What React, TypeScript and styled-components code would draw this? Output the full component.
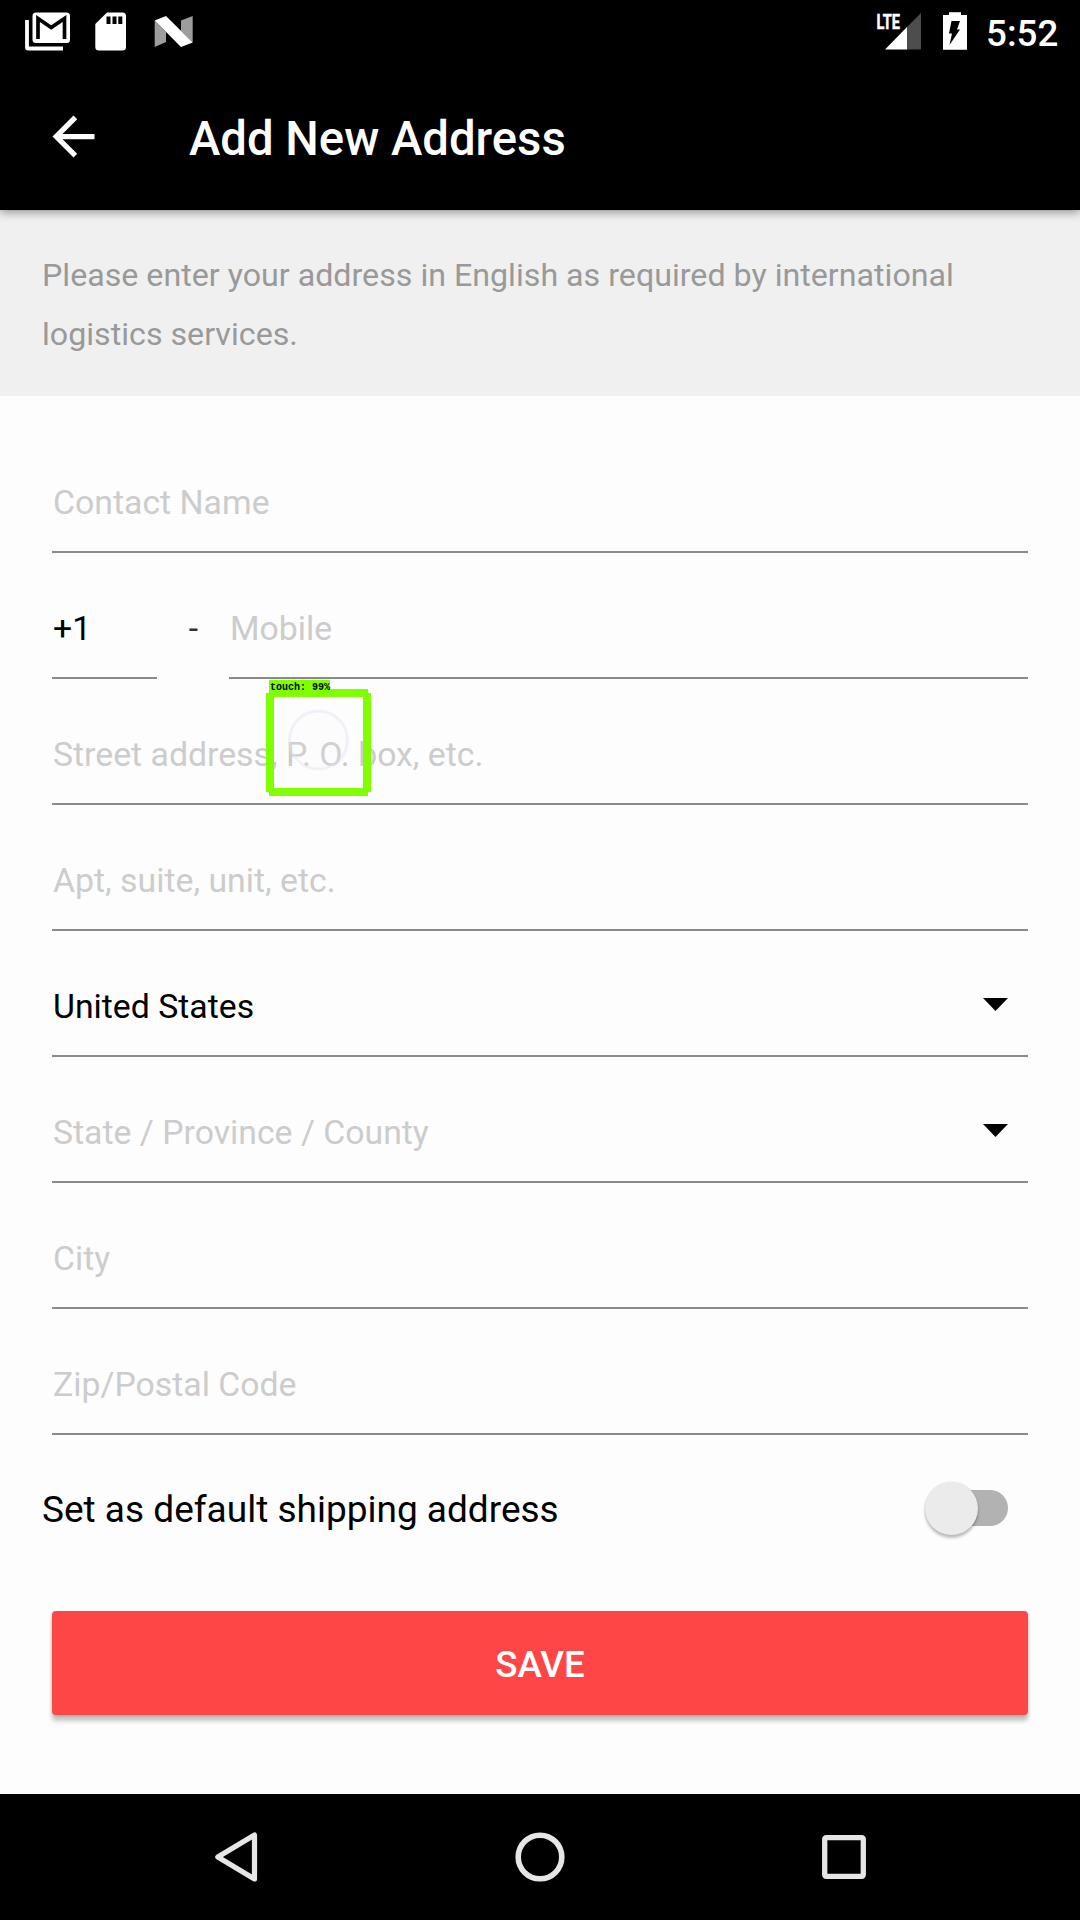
import React from "react";
import styled, { createGlobalStyle } from "styled-components";

const GlobalStyle = createGlobalStyle`
  * { box-sizing: border-box; }
  body { margin: 0; background: #fdfdfd; }
`;

const Screen = styled.div`
  width: 1080px;
  height: 1920px;
  display: flex;
  flex-direction: column;
  background: #fdfdfd;
  font-family: Roboto, "Noto Sans", sans-serif;
  overflow: hidden;
`;

const StatusBar = styled.header`
  height: 63px;
  flex: none;
  display: flex;
  justify-content: space-between;
  padding: 0 10px 0 25px;
  background: #000;
`;

const StatusGroup = styled.div`
  display: flex;
  height: 63px;
`;

const Clock = styled.span`
  width: 94px;
  padding-left: 10px;
  font-size: 36.75px;
  font-weight: 500;
  line-height: 67px;
  color: #fff;
`;

const Toolbar = styled.div`
  height: 147px;
  flex: none;
  display: flex;
  align-items: center;
  padding: 0 42px;
  background: #000;
  box-shadow: 0 2px 9px rgba(0, 0, 0, 0.42);
  position: relative;
  z-index: 1;
`;

const Title = styled.h1`
  margin: 5px 0 0 84px;
  font-size: 47.25px;
  font-weight: 500;
  line-height: 56px;
  color: #fff;
`;

const Notice = styled.p`
  margin: 0;
  height: 186px;
  flex: none;
  padding: 36px 42px 0;
  background: #f0f0f0;
  color: #999;
  font-size: 32.2px;
  line-height: 59px;
`;

const Form = styled.main`
  flex: 1;
  display: flex;
  flex-direction: column;
  padding: 31px 52px 0;
`;

const Field = styled.div<{ $width?: number; $filled?: boolean }>`
  height: 126px;
  width: ${(p) => (p.$width ? `${p.$width}px` : "auto")};
  flex: ${(p) => (p.$width ? "none" : "0 0 126px")};
  display: flex;
  justify-content: space-between;
  align-items: flex-end;
  padding: 0 20px 28px 1px;
  border-bottom: 2px solid #8a8a8a;
  font-size: 33.8px;
  line-height: 40px;
  white-space: nowrap;
  color: ${(p) => (p.$filled ? "#000" : "#ccc")};
`;

const PhoneRow = styled.div`
  display: flex;
  height: 126px;
  flex: none;

  > :last-child {
    flex: 1;
  }
`;

const Dash = styled.span`
  width: 72px;
  padding: 56px 0 0 1px;
  text-align: center;
  font-size: 33.8px;
  line-height: 40px;
  color: #333;
`;

const Anchor = styled.div`
  position: relative;
  flex: none;
`;

const Caret = styled.svg`
  display: block;
  margin-bottom: 16px;
`;

const Detection = styled.div`
  position: absolute;
  left: 214px;
  top: 1px;
  width: 105px;
  height: 116px;
`;

const DetectionLabel = styled.span`
  position: absolute;
  left: 3px;
  top: 0;
  width: 61px;
  height: 13px;
  background: #80ff00;
  color: #000;
  font: bold 10px/15px "Liberation Mono", monospace;
  white-space: pre;
  padding-left: 1px;
`;

const DetectionBox = styled.svg`
  position: absolute;
  left: 0;
  top: 9px;
`;

const DefaultRow = styled.div`
  display: flex;
  align-items: center;
  justify-content: space-between;
  height: 146px;
  margin: 0 20px 0 -10px;
`;

const DefaultLabel = styled.span`
  padding-top: 2px;
  font-size: 37px;
  color: #000;
`;

const Track = styled.span`
  display: flex;
  align-items: center;
  width: 76px;
  height: 36px;
  border-radius: 18px;
  background: #b2b2b2;
`;

const Thumb = styled.span`
  flex: none;
  width: 53px;
  height: 53px;
  margin-left: -7px;
  border-radius: 50%;
  background: #ebebeb;
  box-shadow: 0 3px 3px rgba(0, 0, 0, 0.25), 0 0 2px rgba(0, 0, 0, 0.12);
`;

const SaveButton = styled.button`
  height: 104px;
  margin-top: 30px;
  flex: none;
  border: 0;
  border-radius: 4px;
  background: #ff4646;
  box-shadow: 0 6px 4px rgba(0, 0, 0, 0.22), 0 1px 3px rgba(0, 0, 0, 0.15);
  color: #fff;
  font-family: inherit;
  font-size: 36.75px;
  font-weight: 500;
  padding: 2px 0 0;
`;

const NavBar = styled.nav`
  height: 126px;
  flex: none;
  display: flex;
  justify-content: space-between;
  align-items: center;
  padding: 0 210px;
  background: #000;
`;

const GmailIcon = () => (
  <svg width="51" height="63" viewBox="25 0 51 63">
    <path d="M27 20v27.500q0 1 1 1h35" fill="none" stroke="#fff" strokeWidth="3.800" />
    <rect x="32.500" y="12.500" width="37.500" height="30.500" rx="3.500" fill="#fff" />
    <path d="M38 39V18.500L51.200 27.500 64.500 18.500V39" fill="none" stroke="#000" strokeWidth="3.700" />
  </svg>
);

const SdIcon = () => (
  <svg width="60" height="63" viewBox="76 0 60 63">
    <path d="M107 12.500h15.500q3.500 0 3.500 3.500v31q0 3.500-3.500 3.500h-23.500q-3.700 0-3.700-3.500V24z" fill="#fff" />
    <path d="M106.500 16.500h4v7.500h-4zM112.500 16.500h4v7.500h-4zM118.300 16.500h4v7.500h-4z" fill="#000" />
  </svg>
);

const NougatIcon = () => (
  <svg width="60" height="63" viewBox="136 0 60 63">
    <path d="M154.700 20.500L166 32v10l-11.300 5z" fill="#9d9d9d" />
    <path d="M181 20.500l11.700-4.500v26.500L181 31z" fill="#9d9d9d" />
    <path d="M154.700 20.500l11.300-4.500L192.700 42.500 181 47z" fill="#fff" />
  </svg>
);

const SignalIcon = () => (
  <svg width="66" height="63" viewBox="876 0 66 63">
    <path d="M907 27v22.500h14V13z" fill="#4d4d4d" />
    <path d="M885 49.500h22V27z" fill="#fff" />
    <text
      x="876.500"
      y="29"
      fill="#fff"
      stroke="#fff"
      strokeWidth="0.500"
      fontFamily="Roboto, sans-serif"
      fontSize="21"
      fontWeight="700"
      textLength="23.500"
      lengthAdjust="spacingAndGlyphs"
    >
      LTE
    </text>
  </svg>
);

const BatteryIcon = () => (
  <svg width="34" height="63" viewBox="942 0 34 63">
    <path d="M949 12.300h12V15h6v34.700h-24V15h6z" fill="#fff" />
    <path d="M951.500 21h8.500l-3 8.500h3L949.500 45l2.500-11.500h-3z" fill="#000" />
  </svg>
);

const SpinnerCaret = () => (
  <Caret width="25" height="13" viewBox="0 0 25 13">
    <path d="M0 0h25L12.500 13z" fill="#000" />
  </Caret>
);

export default function App() {
  return (
    <Screen>
      <GlobalStyle />
      <StatusBar>
        <StatusGroup>
          <GmailIcon />
          <SdIcon />
          <NougatIcon />
        </StatusGroup>
        <StatusGroup>
          <SignalIcon />
          <BatteryIcon />
          <Clock>5:52</Clock>
        </StatusGroup>
      </StatusBar>
      <Toolbar>
        <svg width="63" height="63" viewBox="0 0 24 24" fill="#fff">
          <path d="M20 11H7.830l5.590-5.590L12 4l-8 8 8 8 1.410-1.410L7.830 13H20v-2z" />
        </svg>
        <Title>Add New Address</Title>
      </Toolbar>
      <Notice>Please enter your address in English as required by international logistics services.</Notice>
      <Form>
        <Field>Contact Name</Field>
        <PhoneRow>
          <Field $width={105} $filled>+1</Field>
          <Dash>-</Dash>
          <Field>Mobile</Field>
        </PhoneRow>
        <Anchor>
          <Field>Street address, P. O. box, etc.</Field>
          <Detection>
            <DetectionBox width="105" height="107" viewBox="0 0 105 107">
              <circle cx="52.500" cy="51" r="29" fill="rgba(250,249,255,0.1)" stroke="#e4e2f2" strokeOpacity="0.45" strokeWidth="3" />
              <path d="M3 0h99v4h3v99h-3v4H3v-4H0V4h3zM8 8v91h89V8z" fill="#80ff00" fillRule="evenodd" />
            </DetectionBox>
            <DetectionLabel>touch: 99%</DetectionLabel>
          </Detection>
        </Anchor>
        <Field>Apt, suite, unit, etc.</Field>
        <Field $filled>
          United States
          <SpinnerCaret />
        </Field>
        <Field>
          State / Province / County
          <SpinnerCaret />
        </Field>
        <Field>City</Field>
        <Field>Zip/Postal Code</Field>
        <DefaultRow>
          <DefaultLabel>Set as default shipping address</DefaultLabel>
          <Track>
            <Thumb />
          </Track>
        </DefaultRow>
        <SaveButton>SAVE</SaveButton>
      </Form>
      <NavBar>
        <svg width="52" height="60" viewBox="0 0 52 60">
          <path d="M7.800 30L44.500 8v44z" fill="none" stroke="#e6e6e6" strokeWidth="5.200" strokeLinejoin="round" />
        </svg>
        <svg width="60" height="60" viewBox="0 0 60 60">
          <circle cx="30" cy="30" r="21.800" fill="none" stroke="#e6e6e6" strokeWidth="5.600" />
        </svg>
        <svg width="52" height="60" viewBox="0 0 52 60">
          <rect x="6.700" y="10.700" width="38.600" height="38.600" rx="1.500" fill="none" stroke="#e6e6e6" strokeWidth="5.300" />
        </svg>
      </NavBar>
    </Screen>
  );
}
